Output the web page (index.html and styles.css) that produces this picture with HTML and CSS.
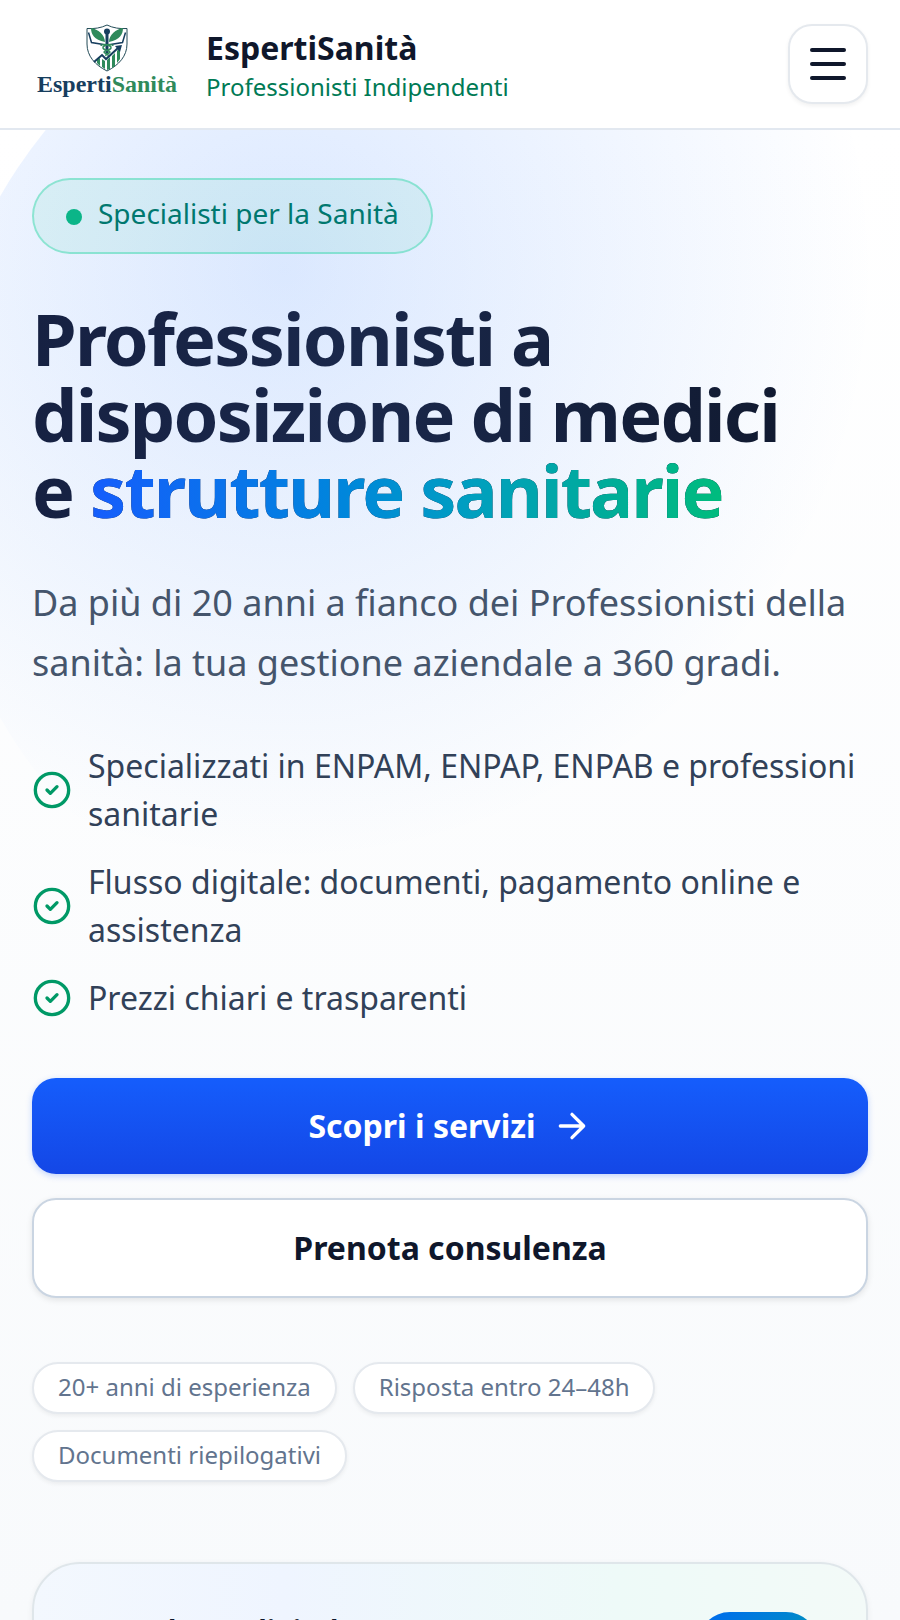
FILE: index.html
```
<!DOCTYPE html>
<html lang="it">
<head>
    <meta charset="UTF-8">
    <meta name="viewport" content="width=device-width, initial-scale=1.0">
    <title>EspertiSanità - Professionisti Indipendenti</title>
    <link rel="stylesheet" href="styles.css">
</head>
<body>
    <header class="header">
        <a class="brand" href="#">
            <span class="logo">
                <svg class="logo-shield" viewBox="0 0 44 48" aria-hidden="true">
                    <path d="M22 1C16 4 9 5 2 4.500V20c0 12 8 21 20 27 12-6 20-15 20-27V4.500C35 5 28 4 22 1z" fill="#fff" stroke="#234b57" stroke-width="1"/>
                    <!-- ali / libro -->
                    <path d="M20 18C20 11 13 5 6 4c0 6 3 12 14 14zM24 18c0-7 7-13 14-14 0 6-3 12-14 14z" fill="#2f8a5b"/>
                    <path d="M3.500 8.500l3 10 12 2M40.500 8.500l-3 10-12 2" fill="none" stroke="#173e5e" stroke-width="1.500"/>
                    <!-- caduceo -->
                    <path d="M22 8v22" stroke="#173e5e" stroke-width="3"/>
                    <circle cx="22" cy="7.500" r="3" fill="#173e5e"/>
                    <path d="M16 22c0-3 11-1 10 2s-7 2-7 4 5 1 4 4M28 22c0-3-11-1-10 2s7 2 7 4-5 1-4 4" fill="none" stroke="#2f8a5b" stroke-width="1.500"/>
                    <!-- grafico -->
                    <path d="M12 39v-3l3-2v8zM17 43v-8l3 2v8zM22 46V36l3-3v12zM27 44V32l3-3v13zM32 39V27l3-4v12z" fill="#2f8a5b"/>
                    <path d="M9 38l8-7 4 4 12-11" fill="none" stroke="#173e5e" stroke-width="2"/>
                    <path d="M30 22l7-1-2 7z" fill="#173e5e"/>
                </svg>
                <span class="logo-text">Esperti<span>Sanità</span></span>
            </span>
            <span class="brand-text">
                <span class="brand-name">EspertiSanità</span>
                <span class="brand-sub">Professionisti Indipendenti</span>
            </span>
        </a>
        <button class="menu-btn" type="button" aria-label="Apri menu">
            <span></span>
            <span></span>
            <span></span>
        </button>
    </header>

    <main class="hero">
        <div class="blob"></div>
        <div class="hero-content">
            <div class="badge"><span class="dot"></span>Specialisti per la Sanità</div>
            <h1>Professionisti a disposizione di medici <br>e <span class="accent">strutture sanitarie</span></h1>
            <p class="lead">Da più di 20 anni a fianco dei Professionisti della sanità: la tua gestione aziendale a 360 gradi.</p>

            <ul class="features">
                <li>
                    <svg viewBox="0 0 24 24"><circle cx="12" cy="12" r="10"/><path d="M9 12l2 2 4-4"/></svg>
                    <span>Specializzati in ENPAM, ENPAP, ENPAB e professioni sanitarie</span>
                </li>
                <li>
                    <svg viewBox="0 0 24 24"><circle cx="12" cy="12" r="10"/><path d="M9 12l2 2 4-4"/></svg>
                    <span>Flusso digitale: documenti, pagamento online e assistenza</span>
                </li>
                <li>
                    <svg viewBox="0 0 24 24"><circle cx="12" cy="12" r="10"/><path d="M9 12l2 2 4-4"/></svg>
                    <span>Prezzi chiari e trasparenti</span>
                </li>
            </ul>

            <div class="actions">
                <a class="btn btn-primary" href="#servizi">
                    Scopri i servizi
                    <svg viewBox="0 0 24 24"><path d="M5 12h14M12 5l7 7-7 7"/></svg>
                </a>
                <a class="btn btn-secondary" href="#consulenza">Prenota consulenza</a>
            </div>

            <div class="chips">
                <span class="chip">20+ anni di esperienza</span>
                <span class="chip">Risposta entro 24–48h</span>
                <span class="chip">Documenti riepilogativi</span>
            </div>

            <section class="card">
                <h2>Consulenza digitale</h2>
                <div class="card-icon"></div>
            </section>
        </div>
    </main>
</body>
</html>
```
FILE: styles.css
```
* {
    box-sizing: border-box;
}
body {
    display: flex;
    flex-direction: column;
    height: 100vh;
    margin: 0;
    overflow: hidden;
    font-family: "Noto Sans", sans-serif;
    color: #0f172b;
    background-color: #fff;
}
a {
    text-decoration: none;
    color: inherit;
}

/* header */
.header {
    display: flex;
    flex-shrink: 0;
    justify-content: space-between;
    align-items: center;
    padding: 24px 32px;
    border-bottom: 2px solid #e2e8f0;
    background-color: #fff;
}
.brand {
    display: flex;
    align-items: center;
    gap: 24px;
}
.logo {
    display: flex;
    flex-direction: column;
    align-items: center;
    width: 150px;
    padding-bottom: 8px;
}
.logo-shield {
    width: 44px;
    height: 48px;
}
.logo-text {
    font-family: "Liberation Serif", serif;
    font-size: 24px;
    line-height: 24px;
    font-weight: bold;
    color: #173e5e;
}
.logo-text span {
    color: #2f8a5b;
}
.brand-text {
    display: flex;
    flex-direction: column;
}
.brand-name {
    font-size: 32px;
    line-height: 46px;
    font-weight: 700;
}
.brand-sub {
    font-size: 24px;
    line-height: 32px;
    color: #007a55;
}
.menu-btn {
    display: flex;
    flex-direction: column;
    justify-content: center;
    align-items: center;
    gap: 10px;
    width: 80px;
    height: 80px;
    padding: 0;
    border: 2px solid #e5e9ee;
    border-radius: 24px;
    background-color: #fff;
    box-shadow: 0 2px 4px rgba(0, 0, 0, 0.06);
    cursor: pointer;
}
.menu-btn span {
    width: 36px;
    height: 4px;
    border-radius: 2px;
    background-color: #0f172b;
}

/* hero */
.hero {
    position: relative;
    flex: 1;
    overflow: hidden;
    padding: 48px 32px;
    background: linear-gradient(to bottom, #fff, #f8fafc);
}
.blob {
    position: absolute;
    top: -193px;
    left: 50%;
    width: 1040px;
    height: 1040px;
    margin-left: -520px;
    border-radius: 50%;
    background: radial-gradient(circle at 34% 32%, rgba(33, 115, 255, 0.16), transparent 60%);
}
.hero-content {
    position: relative;
    display: flex;
    flex-direction: column;
    align-items: stretch;
}
.badge {
    align-self: flex-start;
    padding: 13px 32px 19px;
    border: 2px solid rgba(0, 212, 146, 0.35);
    border-radius: 38px;
    background-color: rgba(0, 188, 125, 0.08);
    font-size: 28px;
    line-height: 40px;
    color: #00786f;
}
.dot {
    display: inline-block;
    width: 16px;
    height: 16px;
    margin-right: 16px;
    border-radius: 50%;
    background-color: #0bb588;
    vertical-align: middle;
}
h1 {
    margin: 46px 0 45px;
    font-size: 72px;
    line-height: 76px;
    font-weight: 700;
    letter-spacing: -0.025em;
    color: transparent;
    background: linear-gradient(to right, #162142, #1a284b 40%, #0f172b);
    -webkit-background-clip: text;
    background-clip: text;
}
.accent {
    background: linear-gradient(to right, #155dfc, #0086dc 40%, #009fc0 60%, #00ab9c 80%, #00bc7d);
    -webkit-background-clip: text;
    background-clip: text;
}
.lead {
    margin: 0 0 49px;
    font-size: 36px;
    line-height: 60px;
    color: #45556c;
}
.features {
    display: flex;
    flex-direction: column;
    gap: 20px;
    margin: 0 0 56px;
    padding: 0;
    list-style: none;
}
.features li {
    display: flex;
    align-items: center;
    gap: 16px;
    font-size: 32px;
    line-height: 48px;
    color: #314158;
}
.features svg {
    flex-shrink: 0;
    width: 40px;
    height: 40px;
    fill: none;
    stroke: #009966;
    stroke-width: 2;
    stroke-linecap: round;
    stroke-linejoin: round;
}
.actions {
    display: flex;
    flex-direction: column;
    gap: 24px;
    margin-bottom: 64px;
}
.btn {
    display: flex;
    justify-content: center;
    align-items: center;
    gap: 16px;
    padding: 24px 48px;
    border-radius: 24px;
    font-size: 32px;
    line-height: 48px;
    font-weight: 700;
}
.btn svg {
    width: 40px;
    height: 40px;
    fill: none;
    stroke: currentColor;
    stroke-width: 2;
    stroke-linecap: round;
    stroke-linejoin: round;
}
.btn-primary {
    color: #fff;
    background: linear-gradient(to bottom, #155dfc, #1447e6);
    box-shadow: 0 2px 6px rgba(21, 93, 252, 0.25);
}
.btn-secondary {
    border: 2px solid #cad5e2;
    background-color: #fff;
    box-shadow: 0 2px 6px rgba(0, 0, 0, 0.1);
}
.chips {
    display: flex;
    flex-wrap: wrap;
    gap: 16px;
    margin-bottom: 80px;
}
.chip {
    padding: 7px 24px 9px;
    border: 2px solid #e5e9ee;
    border-radius: 26px;
    background-color: #fff;
    box-shadow: 0 2px 4px rgba(0, 0, 0, 0.06);
    font-size: 24px;
    line-height: 32px;
    color: #62748e;
}

/* card */
.card {
    display: flex;
    justify-content: space-between;
    align-items: flex-start;
    padding: 48px;
    border: 2px solid #dfe6ea;
    border-radius: 48px;
    background: linear-gradient(to right, #f3f8fe, #eff5ff 30%, #eefaf8 70%, #f3faf8);
    box-shadow: 0 2px 6px rgba(0, 0, 0, 0.06);
}
.card h2 {
    margin: 0;
    font-size: 28px;
    line-height: 36px;
    font-weight: 700;
}
.card-icon {
    width: 120px;
    height: 120px;
    border-radius: 32px;
    background: linear-gradient(to bottom right, #0069f0, #0084d1 40%, #00bc7d);
}
```
